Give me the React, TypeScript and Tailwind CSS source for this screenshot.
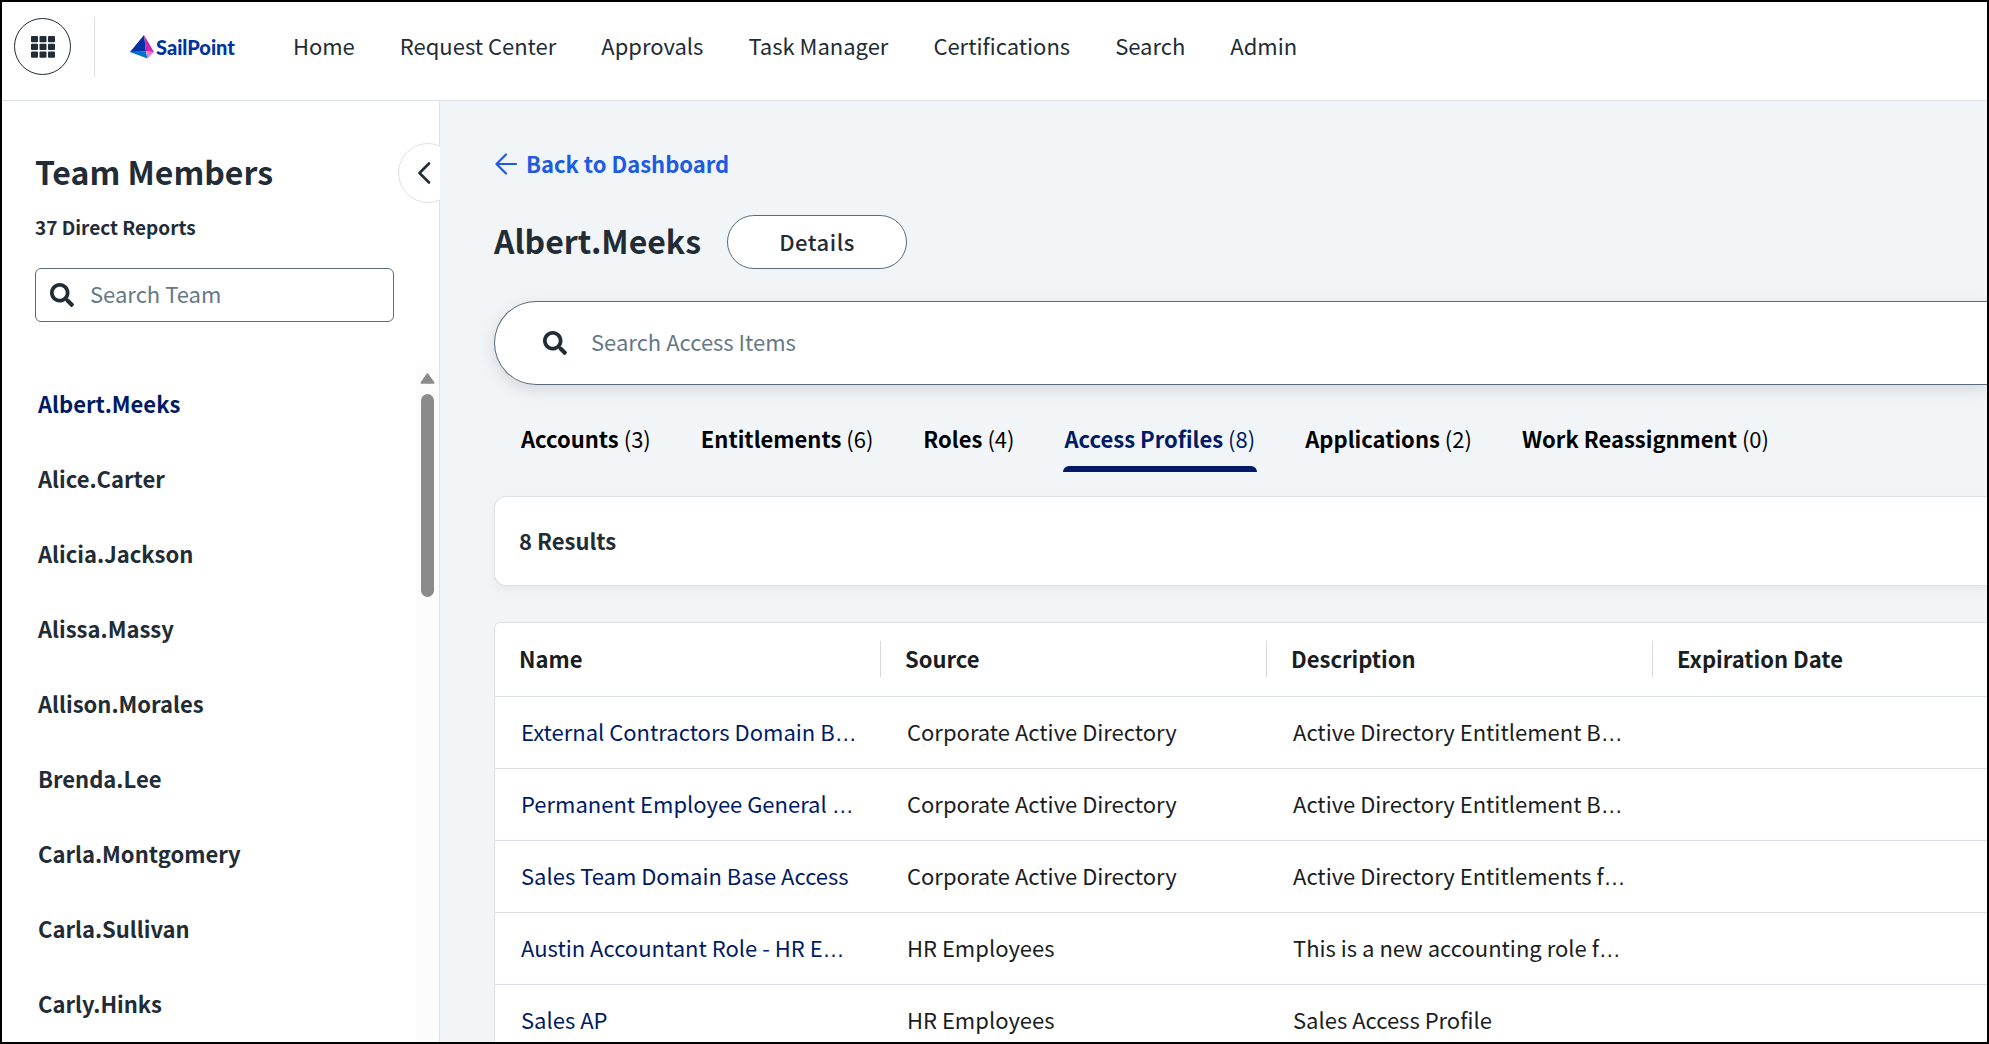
import { useState } from "react";
import { FaSearch } from "react-icons/fa";

const NAV_ITEMS = ["Home", "Request Center", "Approvals", "Task Manager", "Certifications", "Search", "Admin"];

const TEAM = [
  "Albert.Meeks",
  "Alice.Carter",
  "Alicia.Jackson",
  "Alissa.Massy",
  "Allison.Morales",
  "Brenda.Lee",
  "Carla.Montgomery",
  "Carla.Sullivan",
  "Carly.Hinks",
];

const TABS = [
  { label: "Accounts", count: 3 },
  { label: "Entitlements", count: 6 },
  { label: "Roles", count: 4 },
  { label: "Access Profiles", count: 8 },
  { label: "Applications", count: 2 },
  { label: "Work Reassignment", count: 0 },
];

interface AccessProfile {
  name: string;
  source: string;
  description: string;
}

const PROFILES: AccessProfile[] = [
  { name: "External Contractors Domain B…", source: "Corporate Active Directory", description: "Active Directory Entitlement B…" },
  { name: "Permanent Employee General …", source: "Corporate Active Directory", description: "Active Directory Entitlement B…" },
  { name: "Sales Team Domain Base Access", source: "Corporate Active Directory", description: "Active Directory Entitlements f…" },
  { name: "Austin Accountant Role - HR E…", source: "HR Employees", description: "This is a new accounting role f…" },
  { name: "Sales AP", source: "HR Employees", description: "Sales Access Profile" },
];

// The CJK face centres its ellipsis, so the dots come from a Latin one.
function Clipped({ text }: { text: string }) {
  if (!text.endsWith("…")) return <>{text}</>;
  return (
    <>
      {text.slice(0, -1)}
      <span className="font-['Liberation_Sans',sans-serif] leading-none">…</span>
    </>
  );
}

function GridIcon() {
  return (
    <svg viewBox="0 0 24 22" className="h-[22px] w-6" fill="currentColor" aria-hidden>
      {[0, 8.5, 17].map((x) =>
        [0, 7.8, 15.6].map((y) => <rect key={`${x}-${y}`} x={x} y={y} width="7" height="6.2" rx="1" />),
      )}
    </svg>
  );
}

function Logo() {
  return (
    <a href="#" aria-label="SailPoint" className="flex items-center gap-0.5 text-[#0033a1]">
      <svg viewBox="0 0 24 24" className="size-6" aria-hidden>
        <path d="M14 0 16 16.500 0 17Z" fill="#0033a1" />
        <path d="M14 0 24 17 16 16.500Z" fill="#cc27b0" />
        <path d="M0 17 16 16.500 17.500 23.500Z" fill="#0071ce" />
        <path d="M16 16.500 24 17 17.500 23.500Z" fill="#e17fd2" />
      </svg>
      <span className="font-['Lato',sans-serif] text-[20px] leading-6 font-black">SailPoint</span>
    </a>
  );
}

function Header() {
  return (
    <header className="flex h-[99px] shrink-0 items-start border-b border-[#dde1e8] bg-white pt-[15px] pl-3">
      <button
        type="button"
        aria-label="Applications"
        className="mt-px flex size-[57px] items-center justify-center rounded-full border border-[#222c36]"
      >
        <GridIcon />
      </button>
      <div className="ml-[23px] h-[60px] w-px bg-[#dde1e8]" />
      <div className="ml-[35px] flex h-[60px] items-center">
        <Logo />
        <nav className="ml-[58px] flex gap-[45px] pb-1">
          {NAV_ITEMS.map((item) => (
            <a key={item} href="#" className="whitespace-nowrap">
              {item}
            </a>
          ))}
        </nav>
      </div>
    </header>
  );
}

function Sidebar() {
  const [selected, setSelected] = useState(TEAM[0]);

  return (
    <aside className="relative flex w-[438px] shrink-0 flex-col overflow-hidden">
      <div className="flex min-h-0 flex-1 flex-col border-r border-[#dde1e8] bg-white pt-[46px]">
        <div className="px-[33px]">
          <h2 className="text-[32px] leading-12 font-bold">Team Members</h2>
          <p className="mt-[18px] text-[19px] leading-7 font-bold">37 Direct Reports</p>
          <label className="mt-[27px] mr-3 flex h-[54px] items-center gap-4 rounded-md border border-[#5b6b7b] px-3.5">
            <FaSearch className="size-6 shrink-0" aria-hidden />
            <input
              type="text"
              aria-label="Search Team"
              placeholder="Search Team"
              className="w-full min-w-0 pb-1 outline-none placeholder:text-[#647887]"
            />
          </label>
        </div>
        <div className="mt-[45px] flex min-h-0 flex-1">
          <ul className="min-h-0 flex-1 overflow-hidden pl-9">
            {TEAM.map((name) => (
              <li key={name} className="flex h-[75px] items-center pb-1">
                <button
                  type="button"
                  onClick={() => setSelected(name)}
                  className={name === selected ? "font-bold text-[#001a66]" : "font-bold"}
                >
                  {name}
                </button>
              </li>
            ))}
          </ul>
          <div aria-hidden className="flex w-[23px] flex-col items-center bg-[#fcfcfc] pt-1.5">
            <svg viewBox="0 0 15 11" className="h-[11px] w-[15px]">
              <path d="M7.500 1.200 13.500 9.800H1.500Z" fill="#8b8b8b" stroke="#8b8b8b" strokeWidth="2" strokeLinejoin="round" />
            </svg>
            <div className="mt-2.5 h-[203px] w-[13px] rounded-full bg-[#8b8b8b]" />
          </div>
        </div>
      </div>
      <button
        type="button"
        aria-label="Collapse team list"
        className="absolute top-[42px] -right-[18px] flex size-[60px] items-center rounded-full border border-[#dde1e8] bg-white pl-[18px]"
      >
        <svg viewBox="0 0 14 22" className="h-[22px] w-3.5" fill="none" stroke="currentColor" strokeWidth="2.600" strokeLinecap="round" strokeLinejoin="round">
          <path d="M12 1.500 2.500 11 12 20.500" />
        </svg>
      </button>
    </aside>
  );
}

function Tabs() {
  const [active, setActive] = useState("Access Profiles");

  return (
    <div role="tablist" className="mt-[37px] flex gap-[46px] pl-[25px]">
      {TABS.map(({ label, count }) => (
        <button
          key={label}
          type="button"
          role="tab"
          aria-selected={label === active}
          onClick={() => setActive(label)}
          className={`flex flex-col whitespace-nowrap ${label === active ? "text-[#001a66]" : "text-black"}`}
        >
          <span className="px-0.5">
            <b className="font-bold">{label}</b> ({count})
          </span>
          <span className={`mt-3 h-1.5 w-full rounded-t-md ${label === active ? "bg-[#001a66]" : ""}`} />
        </button>
      ))}
    </div>
  );
}

function ResultsTable() {
  return (
    <div className="mt-9 rounded-tl-md border-t border-l border-[#dde1e8] bg-white text-[#1a1d21]">
      <table className="w-full table-fixed border-collapse text-left">
        <colgroup>
          <col className="w-[386px]" />
          <col className="w-[386px]" />
          <col className="w-[386px]" />
          <col />
        </colgroup>
        <thead>
          <tr className="h-[73px] border-b border-[#dde1e8]">
            {["Name", "Source", "Description", "Expiration Date"].map((title, i, all) => (
              <th key={title} className="p-0 font-bold">
                <div className={`flex h-9 items-center pb-0.5 pl-6 ${i < all.length - 1 ? "border-r border-[#d5d9df]" : ""}`}>
                  {title}
                </div>
              </th>
            ))}
          </tr>
        </thead>
        <tbody>
          {PROFILES.map((row) => (
            <tr key={row.name} className="h-[72px] border-b border-[#dedfe9]">
              <td className="truncate pt-0 pr-4 pb-0.5 pl-[26px]">
                <a href="#" className="text-[#001a66]">
                  <Clipped text={row.name} />
                </a>
              </td>
              <td className="truncate pt-0 pr-4 pb-0.5 pl-[26px]">{row.source}</td>
              <td className="truncate pt-0 pr-4 pb-0.5 pl-[26px]">
                <Clipped text={row.description} />
              </td>
              <td />
            </tr>
          ))}
        </tbody>
      </table>
    </div>
  );
}

export default function App() {
  return (
    <div className="flex h-screen flex-col overflow-hidden border-2 border-black bg-white font-['Noto_Sans_CJK_JP',sans-serif] text-[22px] leading-8 text-[#222c36]">
      <Header />
      <div className="flex min-h-0 flex-1">
        <Sidebar />
        <main className="min-w-0 flex-1 overflow-hidden bg-[#f2f5f8] pt-[46px] pl-[54px]">
          <a href="#" className="flex w-fit items-center gap-2 font-bold text-[#1d5be3]">
            <svg viewBox="0 0 24 24" className="size-6" fill="none" stroke="currentColor" strokeWidth="2.200" strokeLinecap="round" strokeLinejoin="round" aria-hidden>
              <path d="M12 2.500 2.500 12 12 21.500M2.500 12H22" />
            </svg>
            <span className="pb-0.5">Back to Dashboard</span>
          </a>
          <div className="mt-[34px] flex items-center gap-[26px]">
            <h1 className="pb-1 text-[32px] leading-12 font-bold">Albert.Meeks</h1>
            <button type="button" className="h-[54px] w-[180px] rounded-full border border-[#5b6b7b] bg-white pb-0.5 font-medium tracking-wide">
              Details
            </button>
          </div>
          <label className="mt-8 flex h-[84px] items-center gap-6 rounded-l-full border border-r-0 border-[#5b6b7b] bg-white pl-12 shadow-[0_5px_16px_rgba(0,0,0,0.12)]">
            <FaSearch className="size-6 shrink-0" aria-hidden />
            <input
              type="text"
              aria-label="Search Access Items"
              placeholder="Search Access Items"
              className="w-full min-w-0 pb-1 outline-none placeholder:text-[#647887]"
            />
          </label>
          <Tabs />
          <div className="mt-6 flex h-[90px] items-center rounded-l-xl border border-r-0 border-[#dde1e8] bg-white pb-0.5 pl-6 font-bold shadow-[0_4px_10px_rgba(0,0,0,0.05)]">
            8 Results
          </div>
          <ResultsTable />
        </main>
      </div>
    </div>
  );
}
